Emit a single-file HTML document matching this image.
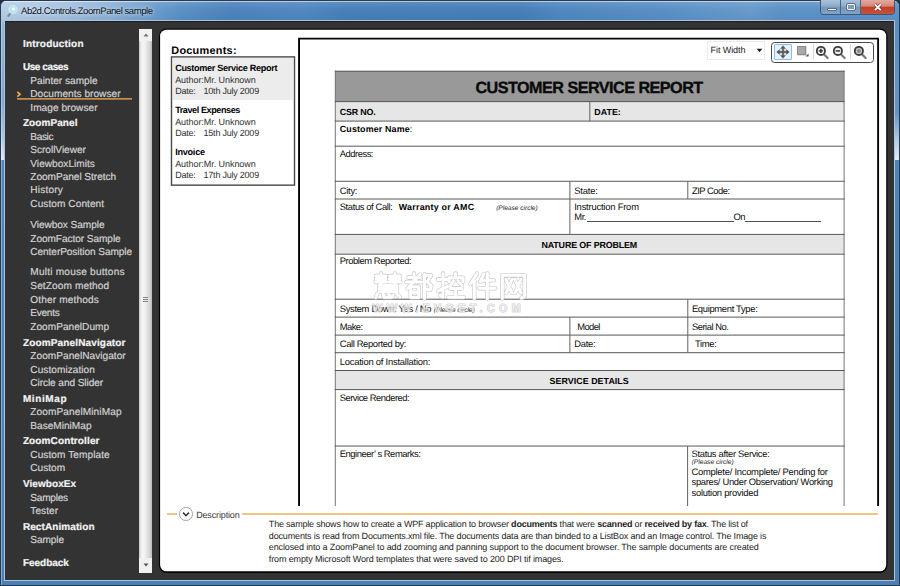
<!DOCTYPE html>
<html><head><meta charset="utf-8"><title>Ab2d.Controls.ZoomPanel sample</title>
<style>
*{margin:0;padding:0;box-sizing:border-box}
html,body{width:900px;height:586px;overflow:hidden}
body{position:relative;background:#22303f;font-family:"Liberation Sans",sans-serif}
.a{position:absolute}
.t{position:absolute;white-space:nowrap;font-family:"Liberation Sans",sans-serif;text-rendering:geometricPrecision}
.hl{position:absolute;height:1px;background:#5a5a5a}
.vl{position:absolute;width:1px;background:#5a5a5a}
</style></head><body>
<!-- window frame -->
<div class="a" id="frame" style="left:0;top:0;width:900px;height:586px;background:#4b80b6;border:1px solid #2a3a4c;border-radius:6px 6px 1px 1px"></div>
<div class="a" style="left:1px;top:21px;width:4px;height:559px;background:linear-gradient(to bottom,#93b6da 0,#7ca6d1 80px,#a6c4e2 115px,#dde9f5 139px,#4f84b9 139px,#4a7fb5 100%)"></div>
<div class="a" style="left:895px;top:21px;width:4px;height:559px;background:linear-gradient(to bottom,#5b8ec2 0,#6294c7 92px,#b3cde7 120px,#e3edf7 139px,#4f84b9 139px,#4a7fb5 100%)"></div>
<div class="a" style="left:1px;top:21px;width:1px;height:564px;background:rgba(255,255,255,.35)"></div>
<div class="a" id="titlebar" style="left:1px;top:1px;width:898px;height:21px;border-radius:5px 5px 0 0;background:linear-gradient(to right,#b6cfe8 0,#a9c5e2 50px,#8bb1d9 110px,#6d9ece 150px,#5a91c6 180px,#4c84bc 230px,#5189c1 300px,#4781b9 345px,#4680b8 520px,#5089c0 560px,#588fc5 650px,#689bcc 750px,#5e93c7 780px,#5e93c7 898px)"></div>
<div class="a" style="left:1px;top:1px;width:898px;height:21px;border-radius:5px 5px 0 0;background:linear-gradient(to bottom,rgba(255,255,255,.6) 0,rgba(255,255,255,.6) 1px,rgba(255,255,255,.1) 1.5px,rgba(255,255,255,0) 8px,rgba(0,0,0,.05) 21px)"></div>
<!-- inner light edge -->
<div class="a" style="left:4px;top:20px;width:891px;height:561px;background:#a9c5e1"></div>
<!-- content -->
<div class="a" id="content" style="left:5px;top:21px;width:889px;height:559px;background:#333;border-top:1px solid #1d1d1d"></div>

<!-- app icon -->
<svg class="a" style="left:5px;top:3px" width="15" height="16" viewBox="0 0 15 16"><line x1="3.2" y1="13" x2="5.6" y2="10.2" stroke="#858b93" stroke-width="2" stroke-linecap="round"/><circle cx="8" cy="6.5" r="4" fill="#b4e4ec" stroke="#d9e6f0" stroke-width="1.2"/><circle cx="8.4" cy="6.1" r="1.7" fill="#f2ffff"/></svg>

<!-- window buttons -->
<div class="a" style="left:820px;top:0;width:75px;height:15px;border:1px solid #3d5774;border-top:none;border-radius:0 0 4px 4px;overflow:hidden;background:#7ba3cc">
  <div class="a" style="left:0;top:0;width:20px;height:14px;background:linear-gradient(#a9c1da 0,#8eacca 45%,#7296bd 50%,#7fa3c9 100%);border-right:1px solid #4a6585"></div>
  <div class="a" style="left:20px;top:0;width:20px;height:14px;background:linear-gradient(#a9c1da 0,#8eacca 45%,#7296bd 50%,#7fa3c9 100%);border-right:1px solid #4a6585"></div>
  <div class="a" style="left:40px;top:0;width:34px;height:14px;background:linear-gradient(#e2aa9e 0,#d68674 45%,#c03e27 50%,#c9513b 100%)"></div>
</div>
<div class="a" style="left:826.5px;top:7.5px;width:10px;height:3.5px;background:#fff;border:1px solid #5b6f88;border-radius:1px"></div>
<div class="a" style="left:846.5px;top:3.5px;width:8.5px;height:6.5px;border:1.5px solid #fff;outline:1px solid #5b6f88;border-radius:1px;background:#7d9cc0"></div>
<svg class="a" style="left:872px;top:2px" width="12" height="10" viewBox="0 0 12 10"><path d="M2.9 2.4 L8.7 8.1 M8.7 2.4 L2.9 8.1" stroke="#7a3328" stroke-width="3.2"/><path d="M2.9 2.4 L8.7 8.1 M8.7 2.4 L2.9 8.1" stroke="#fff" stroke-width="1.9"/></svg>

<!-- sidebar selection marker -->
<div class="a" style="left:17px;top:98px;width:115px;height:1px;background:#c4904c"></div><div class="a" style="left:17px;top:99px;width:115px;height:1px;background:#9a7644"></div>
<svg class="a" style="left:16px;top:91px" width="6" height="7" viewBox="0 0 6 7"><path d="M1.3 0.9 L4.1 3.3 L1.3 5.7" fill="none" stroke="#eeaa4a" stroke-width="1.7"/></svg>

<!-- sidebar scrollbar -->
<div class="a" style="left:139px;top:29px;width:13px;height:544px;background:#ececec"></div>
<div class="a" style="left:139px;top:29px;width:13px;height:12px;background:#f1f1f1"></div>
<div class="a" style="left:139px;top:41px;width:13px;height:517px;border-radius:1px;background:linear-gradient(to right,#c2c2c2 0,#efefef 2px,#f5f5f5 5px,#dedede 9px,#d3d3d3 11px,#b8b8b8 13px)"></div>
<div class="a" style="left:139px;top:558px;width:13px;height:15px;background:#f0f0f0"></div>
<svg class="a" style="left:142.5px;top:33px" width="6" height="4" viewBox="0 0 6 4"><path d="M0.5 3.5 L3 0.6 L5.5 3.5Z" fill="#707070"/></svg>
<svg class="a" style="left:142.5px;top:563px" width="6" height="4" viewBox="0 0 6 4"><path d="M0.5 0.5 L3 3.4 L5.5 0.5Z" fill="#555"/></svg>
<div class="a" style="left:143px;top:297px;width:5px;height:1px;background:#858585;box-shadow:0 2px 0 #858585,0 4px 0 #858585"></div>

<!-- main white panel -->
<svg class="a" id="panel" style="left:150px;top:20px" width="750" height="566" viewBox="150 20 750 566"><rect x="158.9" y="28.6" width="728.6" height="544.3" rx="7.6" fill="#040404"/><rect x="160.1" y="29.7" width="726.1" height="541.6" rx="6.4" fill="#fff"/></svg>

<!-- documents list box -->
<svg class="a" style="left:165px;top:50px" width="136" height="142" viewBox="165 50 136 142"><rect x="171.5" y="56.9" width="123" height="128.25" fill="#fff" stroke="#484848" stroke-width="1.4"/></svg>
<div class="a" style="left:173px;top:58px;width:120px;height:42px;background:#ececec"></div>

<!-- doc viewer border (clipped at bottom) -->
<svg class="a" style="left:290px;top:30px" width="600" height="480" viewBox="290 30 600 480"><path d="M299.05 506 V38.6 H878.1 V506" fill="none" stroke="#060606" stroke-width="1.9"/></svg>

<!-- combo box -->
<div class="a" style="left:707px;top:41px;width:58px;height:19px;border:1px solid #ebebeb;background:#fff"></div>
<svg class="a" style="left:756px;top:48px" width="7" height="5" viewBox="0 0 7 5"><path d="M0.6 0.8 L6.4 0.8 L3.5 4.2Z" fill="#222"/></svg>

<!-- toolbar -->
<div class="a" style="left:771px;top:42px;width:103px;height:21px;border:1px solid #484848;border-radius:3.5px;background:#fff"></div>
<div class="a" style="left:774px;top:44px;width:18px;height:16px;border:1px solid #8bbcec;background:#e6f1fc;border-radius:1px"></div>
<svg class="a" style="left:776px;top:45px" width="14" height="14" viewBox="0 0 14 14"><path d="M7 0.7 L9.4 3.6 H7.7 V6.3 H10.4 V4.6 L13.3 7 L10.4 9.4 V7.7 H7.7 V10.4 H9.4 L7 13.3 L4.6 10.4 H6.3 V7.7 H3.6 V9.4 L0.7 7 L3.6 4.6 V6.3 H6.3 V3.6 H4.6Z" fill="#555" stroke="#555" stroke-width="0.5" stroke-linejoin="round"/></svg>
<div class="a" style="left:797px;top:46px;width:9px;height:9px;background:#a9a9a9;border:1px solid #8c8c8c;box-shadow:0.5px 0.5px 0 #bbb"></div>
<svg class="a" style="left:804.8px;top:53.2px" width="4" height="4" viewBox="0 0 4 4"><path d="M3.6 0.4 V3.6 H0.4Z" fill="#555"/></svg>
<div class="a" style="left:813px;top:44px;width:1px;height:15px;background:#d6d6d6"></div>
<div class="a" style="left:850px;top:44px;width:1px;height:15px;background:#d6d6d6"></div>
<svg class="a" style="left:814.4px;top:44px" width="16" height="16" viewBox="0 0 16 16"><line x1="9.6" y1="10" x2="13.6" y2="14" stroke="#7a7a7a" stroke-width="2.3" stroke-linecap="round"/><circle cx="6.9" cy="6.9" r="4.1" fill="#eee" stroke="#3c3c3c" stroke-width="1.8"/><path d="M4.7 6.9 H9.1 M6.9 4.7 V9.1" stroke="#2c2c2c" stroke-width="1.4"/></svg>
<svg class="a" style="left:830.8px;top:44px" width="16" height="16" viewBox="0 0 16 16"><line x1="9.6" y1="10" x2="13.6" y2="14" stroke="#7a7a7a" stroke-width="2.3" stroke-linecap="round"/><circle cx="6.9" cy="6.9" r="4.1" fill="#eee" stroke="#3c3c3c" stroke-width="1.8"/><path d="M4.7 6.9 H9.1" stroke="#2c2c2c" stroke-width="1.4"/></svg>
<svg class="a" style="left:851.7px;top:44px" width="16" height="16" viewBox="0 0 16 16"><line x1="9.6" y1="10" x2="13.6" y2="14" stroke="#7a7a7a" stroke-width="2.3" stroke-linecap="round"/><circle cx="6.9" cy="6.9" r="4.1" fill="#c4c4c4" stroke="#3c3c3c" stroke-width="1.8"/><circle cx="6.9" cy="6.9" r="2" fill="#8a8a8a"/></svg>

<!-- document table -->
<div class="a" style="left:335px;top:71px;width:509px;height:31px;background:#999"></div>
<div class="a" style="left:335px;top:102px;width:509px;height:19px;background:#e6e6e6"></div>
<div class="a" style="left:335px;top:234px;width:509px;height:20px;background:#e6e6e6"></div>
<div class="a" style="left:335px;top:370px;width:509px;height:20px;background:#e6e6e6"></div>
<!-- table lines -->
<svg class="a" style="left:330px;top:66px" width="520" height="440" viewBox="330 66 520 440"><path d="M335.3 70.7V506 M844.1 70.7V506" stroke="#767676" stroke-width="1" fill="none"/><path d="M334.8 71.2H844.6 M334.8 101.6H844.6 M334.8 121.1H844.6 M334.8 146.2H844.6 M334.8 181.25H844.6 M334.8 199.0H844.6 M334.8 234.4H844.6 M334.8 254.2H844.6 M334.8 299.2H844.6 M334.8 317.1H844.6 M334.8 335.1H844.6 M334.8 352.7H844.6 M334.8 370.5H844.6 M334.8 389.6H844.6 M334.8 446.05H844.6" stroke="#585858" stroke-width="1" fill="none"/><path d="M589.8 101.6V121.1 M569.9 181.25V234.4 M687.8 181.25V199.0 M687.8 299.2V352.7 M569.9 317.1V352.7 M687.6 446.05V506" stroke="#626262" stroke-width="1" fill="none"/></svg>
<!-- underscores -->
<div class="a" style="left:586.5px;top:221px;width:147.5px;height:1px;background:#505050"></div>
<div class="a" style="left:745px;top:221px;width:76px;height:1px;background:#505050"></div>

<!-- description -->
<div class="a" style="left:167px;top:513px;width:10px;height:2px;background:#f4c482"></div>
<div class="a" style="left:242px;top:513px;width:636px;height:2px;background:#f4c482"></div>
<div class="a" style="left:179px;top:507px;width:13.5px;height:13.5px;border:1px solid #a2a2a2;border-radius:50%;background:#fff"></div>
<svg class="a" style="left:182px;top:510.5px" width="8" height="7" viewBox="0 0 8 7"><path d="M1 1.6 L4 4.6 L7 1.6" fill="none" stroke="#3a3a3a" stroke-width="1.5"/></svg>

<div class="t" id="t0" style="left:22.90px;top:38.03px;font-size:10.0px;line-height:13px;color:#f4f4f4;font-weight:bold;letter-spacing:0.207px;-webkit-text-stroke:0.2px #f4f4f4;">Introduction</div>
<div class="t" id="t1" style="left:22.90px;top:61.23px;font-size:10.0px;line-height:13px;color:#f4f4f4;font-weight:bold;letter-spacing:-0.417px;-webkit-text-stroke:0.2px #f4f4f4;">Use cases</div>
<div class="t" id="t2" style="left:22.90px;top:116.73px;font-size:10.0px;line-height:13px;color:#f4f4f4;font-weight:bold;letter-spacing:0.087px;-webkit-text-stroke:0.2px #f4f4f4;">ZoomPanel</div>
<div class="t" id="t3" style="left:22.90px;top:336.64px;font-size:10.0px;line-height:13px;color:#f4f4f4;font-weight:bold;letter-spacing:0.151px;-webkit-text-stroke:0.2px #f4f4f4;">ZoomPanelNavigator</div>
<div class="t" id="t4" style="left:22.90px;top:392.64px;font-size:10.0px;line-height:13px;color:#f4f4f4;font-weight:bold;letter-spacing:0.600px;-webkit-text-stroke:0.2px #f4f4f4;">MiniMap</div>
<div class="t" id="t5" style="left:22.90px;top:435.44px;font-size:10.0px;line-height:13px;color:#f4f4f4;font-weight:bold;letter-spacing:0.123px;-webkit-text-stroke:0.2px #f4f4f4;">ZoomController</div>
<div class="t" id="t6" style="left:22.90px;top:478.04px;font-size:10.0px;line-height:13px;color:#f4f4f4;font-weight:bold;letter-spacing:0.072px;-webkit-text-stroke:0.2px #f4f4f4;">ViewboxEx</div>
<div class="t" id="t7" style="left:22.90px;top:520.63px;font-size:10.0px;line-height:13px;color:#f4f4f4;font-weight:bold;letter-spacing:0.086px;-webkit-text-stroke:0.2px #f4f4f4;">RectAnimation</div>
<div class="t" id="t8" style="left:22.90px;top:557.03px;font-size:10.0px;line-height:13px;color:#f4f4f4;font-weight:bold;letter-spacing:-0.020px;-webkit-text-stroke:0.2px #f4f4f4;">Feedback</div>
<div class="t" id="t9" style="left:30.30px;top:74.50px;font-size:10.1px;line-height:13px;color:#d2d2d2;letter-spacing:-0.009px;-webkit-text-stroke:0.2px #d2d2d2;">Painter sample</div>
<div class="t" id="t10" style="left:30.30px;top:88.10px;font-size:10.1px;line-height:13px;color:#d2d2d2;letter-spacing:0.028px;-webkit-text-stroke:0.2px #d2d2d2;">Documents browser</div>
<div class="t" id="t11" style="left:30.30px;top:101.80px;font-size:10.1px;line-height:13px;color:#d2d2d2;letter-spacing:0.037px;-webkit-text-stroke:0.2px #d2d2d2;">Image browser</div>
<div class="t" id="t12" style="left:30.30px;top:130.60px;font-size:10.1px;line-height:13px;color:#d2d2d2;letter-spacing:-0.369px;-webkit-text-stroke:0.2px #d2d2d2;">Basic</div>
<div class="t" id="t13" style="left:30.30px;top:144.00px;font-size:10.1px;line-height:13px;color:#d2d2d2;letter-spacing:-0.028px;-webkit-text-stroke:0.2px #d2d2d2;">ScrollViewer</div>
<div class="t" id="t14" style="left:30.30px;top:157.70px;font-size:10.1px;line-height:13px;color:#d2d2d2;letter-spacing:0.023px;-webkit-text-stroke:0.2px #d2d2d2;">ViewboxLimits</div>
<div class="t" id="t15" style="left:30.30px;top:171.40px;font-size:10.1px;line-height:13px;color:#d2d2d2;letter-spacing:-0.037px;-webkit-text-stroke:0.2px #d2d2d2;">ZoomPanel Stretch</div>
<div class="t" id="t16" style="left:30.30px;top:184.40px;font-size:10.1px;line-height:13px;color:#d2d2d2;letter-spacing:0.201px;-webkit-text-stroke:0.2px #d2d2d2;">History</div>
<div class="t" id="t17" style="left:30.30px;top:198.40px;font-size:10.1px;line-height:13px;color:#d2d2d2;letter-spacing:0.067px;-webkit-text-stroke:0.2px #d2d2d2;">Custom Content</div>
<div class="t" id="t18" style="left:30.30px;top:219.00px;font-size:10.1px;line-height:13px;color:#d2d2d2;letter-spacing:-0.061px;-webkit-text-stroke:0.2px #d2d2d2;">Viewbox Sample</div>
<div class="t" id="t19" style="left:30.30px;top:232.60px;font-size:10.1px;line-height:13px;color:#d2d2d2;letter-spacing:-0.064px;-webkit-text-stroke:0.2px #d2d2d2;">ZoomFactor Sample</div>
<div class="t" id="t20" style="left:30.30px;top:246.00px;font-size:10.1px;line-height:13px;color:#d2d2d2;letter-spacing:-0.071px;-webkit-text-stroke:0.2px #d2d2d2;">CenterPosition Sample</div>
<div class="t" id="t21" style="left:30.30px;top:266.20px;font-size:10.1px;line-height:13px;color:#d2d2d2;letter-spacing:0.216px;-webkit-text-stroke:0.2px #d2d2d2;">Multi mouse buttons</div>
<div class="t" id="t22" style="left:30.30px;top:280.30px;font-size:10.1px;line-height:13px;color:#d2d2d2;letter-spacing:0.106px;-webkit-text-stroke:0.2px #d2d2d2;">SetZoom method</div>
<div class="t" id="t23" style="left:30.30px;top:293.90px;font-size:10.1px;line-height:13px;color:#d2d2d2;letter-spacing:0.154px;-webkit-text-stroke:0.2px #d2d2d2;">Other methods</div>
<div class="t" id="t24" style="left:30.30px;top:306.80px;font-size:10.1px;line-height:13px;color:#d2d2d2;letter-spacing:-0.290px;-webkit-text-stroke:0.2px #d2d2d2;">Events</div>
<div class="t" id="t25" style="left:30.30px;top:320.80px;font-size:10.1px;line-height:13px;color:#d2d2d2;letter-spacing:0.022px;-webkit-text-stroke:0.2px #d2d2d2;">ZoomPanelDump</div>
<div class="t" id="t26" style="left:30.30px;top:350.00px;font-size:10.1px;line-height:13px;color:#d2d2d2;letter-spacing:0.034px;-webkit-text-stroke:0.2px #d2d2d2;">ZoomPanelNavigator</div>
<div class="t" id="t27" style="left:30.30px;top:363.60px;font-size:10.1px;line-height:13px;color:#d2d2d2;letter-spacing:0.053px;-webkit-text-stroke:0.2px #d2d2d2;">Customization</div>
<div class="t" id="t28" style="left:30.30px;top:376.80px;font-size:10.1px;line-height:13px;color:#d2d2d2;letter-spacing:-0.078px;-webkit-text-stroke:0.2px #d2d2d2;">Circle and Slider</div>
<div class="t" id="t29" style="left:30.30px;top:406.20px;font-size:10.1px;line-height:13px;color:#d2d2d2;letter-spacing:0.096px;-webkit-text-stroke:0.2px #d2d2d2;">ZoomPanelMiniMap</div>
<div class="t" id="t30" style="left:30.30px;top:419.60px;font-size:10.1px;line-height:13px;color:#d2d2d2;letter-spacing:0.005px;-webkit-text-stroke:0.2px #d2d2d2;">BaseMiniMap</div>
<div class="t" id="t31" style="left:30.30px;top:448.80px;font-size:10.1px;line-height:13px;color:#d2d2d2;letter-spacing:0.075px;-webkit-text-stroke:0.2px #d2d2d2;">Custom Template</div>
<div class="t" id="t32" style="left:30.30px;top:462.20px;font-size:10.1px;line-height:13px;color:#d2d2d2;letter-spacing:0.006px;-webkit-text-stroke:0.2px #d2d2d2;">Custom</div>
<div class="t" id="t33" style="left:30.30px;top:491.60px;font-size:10.1px;line-height:13px;color:#d2d2d2;letter-spacing:-0.245px;-webkit-text-stroke:0.2px #d2d2d2;">Samples</div>
<div class="t" id="t34" style="left:30.30px;top:505.00px;font-size:10.1px;line-height:13px;color:#d2d2d2;letter-spacing:0.062px;-webkit-text-stroke:0.2px #d2d2d2;">Tester</div>
<div class="t" id="t35" style="left:30.30px;top:534.20px;font-size:10.1px;line-height:13px;color:#d2d2d2;letter-spacing:-0.085px;-webkit-text-stroke:0.2px #d2d2d2;">Sample</div>
<div class="t" id="t36" style="left:21.02px;top:5.91px;font-size:9.5px;line-height:12px;color:#0a1018;letter-spacing:-0.439px;text-shadow:0 0 3px rgba(255,255,255,.75),0 0 6px rgba(255,255,255,.5);">Ab2d.Controls.ZoomPanel sample</div>
<div class="t" id="t37" style="left:171.26px;top:44.02px;font-size:10.9px;line-height:14px;color:#000;font-weight:bold;letter-spacing:0.261px;">Documents:</div>
<div class="t" id="t38" style="left:175.14px;top:61.75px;font-size:9.1px;line-height:12px;color:#000;font-weight:bold;letter-spacing:-0.312px;">Customer Service Report</div>
<div class="t" id="t39" style="left:175.15px;top:73.58px;font-size:9.0px;line-height:12px;color:#303030;letter-spacing:-0.056px;">Author:Mr. Unknown</div>
<div class="t" id="t40" style="left:175.15px;top:85.13px;font-size:9.0px;line-height:12px;color:#303030;letter-spacing:-0.254px;">Date:</div>
<div class="t" id="t41" style="left:203.55px;top:85.13px;font-size:9.0px;line-height:12px;color:#303030;letter-spacing:-0.227px;">10th July 2009</div>
<div class="t" id="t42" style="left:175.14px;top:103.95px;font-size:9.1px;line-height:12px;color:#000;font-weight:bold;letter-spacing:-0.434px;">Travel Expenses</div>
<div class="t" id="t43" style="left:175.15px;top:115.78px;font-size:9.0px;line-height:12px;color:#303030;letter-spacing:-0.056px;">Author:Mr. Unknown</div>
<div class="t" id="t44" style="left:175.15px;top:127.33px;font-size:9.0px;line-height:12px;color:#303030;letter-spacing:-0.254px;">Date:</div>
<div class="t" id="t45" style="left:203.55px;top:127.33px;font-size:9.0px;line-height:12px;color:#303030;letter-spacing:-0.227px;">15th July 2009</div>
<div class="t" id="t46" style="left:175.14px;top:145.85px;font-size:9.1px;line-height:12px;color:#000;font-weight:bold;letter-spacing:-0.239px;">Invoice</div>
<div class="t" id="t47" style="left:175.15px;top:157.68px;font-size:9.0px;line-height:12px;color:#303030;letter-spacing:-0.056px;">Author:Mr. Unknown</div>
<div class="t" id="t48" style="left:175.15px;top:169.23px;font-size:9.0px;line-height:12px;color:#303030;letter-spacing:-0.254px;">Date:</div>
<div class="t" id="t49" style="left:203.55px;top:169.23px;font-size:9.0px;line-height:12px;color:#303030;letter-spacing:-0.227px;">17th July 2009</div>
<div class="t" id="t50" style="left:710.55px;top:43.88px;font-size:9.0px;line-height:12px;color:#222;letter-spacing:-0.077px;">Fit Width</div>
<div class="t" id="t51" style="left:475.38px;top:77.89px;font-size:16.2px;line-height:21px;color:#0a0a0a;font-weight:bold;letter-spacing:-0.533px;-webkit-text-stroke:0.35px #0a0a0a;">CUSTOMER SERVICE REPORT</div>
<div class="t" id="t52" style="left:339.75px;top:106.22px;font-size:8.9px;line-height:12px;color:#000;font-weight:bold;letter-spacing:-0.166px;">CSR NO.</div>
<div class="t" id="t53" style="left:594.35px;top:106.22px;font-size:8.9px;line-height:12px;color:#000;font-weight:bold;letter-spacing:0.005px;">DATE:</div>
<div class="t" id="t54" style="left:339.75px;top:123.32px;font-size:8.9px;line-height:12px;color:#000;letter-spacing:0.151px;"><b>Customer Name</b>:</div>
<div class="t" id="t55" style="left:339.73px;top:147.54px;font-size:9.4px;line-height:12px;color:#0c0c0c;letter-spacing:-0.466px;">Address:</div>
<div class="t" id="t56" style="left:339.73px;top:184.54px;font-size:9.4px;line-height:12px;color:#0c0c0c;letter-spacing:-0.252px;">City:</div>
<div class="t" id="t57" style="left:574.23px;top:184.54px;font-size:9.4px;line-height:12px;color:#0c0c0c;letter-spacing:-0.152px;">State:</div>
<div class="t" id="t58" style="left:691.93px;top:184.54px;font-size:9.4px;line-height:12px;color:#0c0c0c;letter-spacing:-0.488px;">ZIP Code:</div>
<div class="t" id="t59" style="left:339.73px;top:200.74px;font-size:9.4px;line-height:12px;color:#0c0c0c;letter-spacing:-0.374px;">Status of Call:</div>
<div class="t" id="t60" style="left:398.75px;top:200.92px;font-size:8.9px;line-height:12px;color:#000;font-weight:bold;letter-spacing:0.247px;">Warranty or AMC</div>
<div class="t" id="t61" style="left:496.17px;top:204.21px;font-size:6.6px;line-height:9px;color:#222;font-style:italic;letter-spacing:-0.016px;">(Please circle)</div>
<div class="t" id="t62" style="left:574.23px;top:200.94px;font-size:9.4px;line-height:12px;color:#0c0c0c;letter-spacing:-0.200px;">Instruction From</div>
<div class="t" id="t63" style="left:574.23px;top:211.14px;font-size:9.4px;line-height:12px;color:#0c0c0c;letter-spacing:-0.396px;">Mr.</div>
<div class="t" id="t64" style="left:733.53px;top:211.14px;font-size:9.4px;line-height:12px;color:#0c0c0c;letter-spacing:-0.576px;">On</div>
<div class="t" id="t65" style="left:541.45px;top:238.52px;font-size:8.9px;line-height:12px;color:#000;font-weight:bold;letter-spacing:-0.135px;">NATURE OF PROBLEM</div>
<div class="t" id="t66" style="left:339.73px;top:255.34px;font-size:9.4px;line-height:12px;color:#0c0c0c;letter-spacing:-0.422px;">Problem Reported:</div>
<div class="t" id="t67" style="left:339.73px;top:303.44px;font-size:9.4px;line-height:12px;color:#0c0c0c;letter-spacing:-0.311px;">System Down: Yes / No</div>
<div class="t" id="t68" style="left:433.67px;top:305.81px;font-size:6.6px;line-height:9px;color:#222;font-style:italic;letter-spacing:-0.059px;">(Please circle)</div>
<div class="t" id="t69" style="left:691.93px;top:303.44px;font-size:9.4px;line-height:12px;color:#0c0c0c;letter-spacing:-0.311px;">Equipment Type:</div>
<div class="t" id="t70" style="left:339.73px;top:321.34px;font-size:9.4px;line-height:12px;color:#0c0c0c;letter-spacing:-0.523px;">Make:</div>
<div class="t" id="t71" style="left:577.23px;top:321.34px;font-size:9.4px;line-height:12px;color:#0c0c0c;letter-spacing:-0.577px;">Model</div>
<div class="t" id="t72" style="left:691.93px;top:321.34px;font-size:9.4px;line-height:12px;color:#0c0c0c;letter-spacing:-0.481px;">Serial No.</div>
<div class="t" id="t73" style="left:339.73px;top:337.94px;font-size:9.4px;line-height:12px;color:#0c0c0c;letter-spacing:-0.356px;">Call Reported by:</div>
<div class="t" id="t74" style="left:574.23px;top:337.94px;font-size:9.4px;line-height:12px;color:#0c0c0c;letter-spacing:-0.245px;">Date:</div>
<div class="t" id="t75" style="left:695.03px;top:337.94px;font-size:9.4px;line-height:12px;color:#0c0c0c;letter-spacing:-0.338px;">Time:</div>
<div class="t" id="t76" style="left:339.73px;top:355.74px;font-size:9.4px;line-height:12px;color:#0c0c0c;letter-spacing:-0.215px;">Location of Installation:</div>
<div class="t" id="t77" style="left:549.55px;top:374.62px;font-size:8.9px;line-height:12px;color:#000;font-weight:bold;letter-spacing:0.044px;">SERVICE DETAILS</div>
<div class="t" id="t78" style="left:339.73px;top:391.54px;font-size:9.4px;line-height:12px;color:#0c0c0c;letter-spacing:-0.482px;">Service Rendered:</div>
<div class="t" id="t79" style="left:339.73px;top:447.74px;font-size:9.4px;line-height:12px;color:#0c0c0c;letter-spacing:-0.452px;">Engineer&rsquo; s Remarks:</div>
<div class="t" id="t80" style="left:691.53px;top:448.44px;font-size:9.4px;line-height:12px;color:#0c0c0c;letter-spacing:-0.309px;">Status after Service:</div>
<div class="t" id="t81" style="left:691.67px;top:458.21px;font-size:6.6px;line-height:9px;color:#222;font-style:italic;letter-spacing:0.013px;">(Please circle)</div>
<div class="t" id="t82" style="left:691.53px;top:465.54px;font-size:9.4px;line-height:12px;color:#0c0c0c;letter-spacing:-0.247px;">Complete/ Incomplete/ Pending for</div>
<div class="t" id="t83" style="left:691.53px;top:476.04px;font-size:9.4px;line-height:12px;color:#0c0c0c;letter-spacing:-0.304px;">spares/ Under Observation/ Working</div>
<div class="t" id="t84" style="left:691.53px;top:486.64px;font-size:9.4px;line-height:12px;color:#0c0c0c;letter-spacing:-0.253px;">solution provided</div>
<div class="t" id="t85" style="left:196.15px;top:509.38px;font-size:9.0px;line-height:12px;color:#3a3a3a;letter-spacing:-0.143px;">Description</div>
<div class="t" id="t86" style="left:268.85px;top:517.68px;font-size:9.0px;line-height:12px;color:#1c1c1c;letter-spacing:-0.198px;">The sample shows how to create a WPF application to browser <b>documents</b> that were <b>scanned</b> or <b>received by fax</b>. The list of</div>
<div class="t" id="t87" style="left:268.85px;top:530.48px;font-size:9.0px;line-height:12px;color:#1c1c1c;letter-spacing:-0.164px;">documents is read from Documents.xml file. The documents data are than binded to a ListBox and an Image control. The Image is</div>
<div class="t" id="t88" style="left:268.85px;top:541.18px;font-size:9.0px;line-height:12px;color:#1c1c1c;letter-spacing:-0.130px;">enclosed into a ZoomPanel to add zooming and panning support to the document browser. The sample documents are created</div>
<div class="t" id="t89" style="left:268.85px;top:552.88px;font-size:9.0px;line-height:12px;color:#1c1c1c;letter-spacing:-0.124px;">from empty Microsoft Word templates that were saved to 200 DPI tif images.</div>
<!-- watermark -->
<svg class="a" style="left:368px;top:270px;opacity:.92" width="164" height="46" viewBox="368 270 164 46">
<g fill="none" stroke-linecap="round" stroke-linejoin="round">
<path transform="translate(375 273.5)" d="M1 2.5H11 M1 5.5H11 M0.5 8.5H11.5 M6 0V10.5 M14.5 2.5H25 M14.5 5.5H25 M14 8.5H25.5 M19.8 0V10.5 M4 12H22V18H4 M4 15H22 M2.5 20L0.8 24 M8 19.5L8.8 23.8H17.2L18 21.5 M13 19L14.5 21.5 M21 19.5L24.8 23.5" stroke="#c4c4c4" stroke-width="4.3"/>
<path transform="translate(406.5 273.5)" d="M2 4H13 M7.5 0V8.5 M0 8.5H15 M13.5 1L1 15 M4.2 13.2H12.2V24H4.2Z M4.2 18.6H12.2 M18 1V25 M18 2H24.5L20.8 8L24.8 12.5L23.5 16.5L19.5 15.5" stroke="#c4c4c4" stroke-width="4.3"/>
<path transform="translate(438 273.5)" d="M0 6H9.5 M5 0V23.5L2 22 M0 17.5L9.5 13 M17.5 0V3 M11 8V4.2H25V8 M15.5 7.5L12 12.5 M20 7.5L24 12 M12 15H23.5 M17.8 15V23.5 M10.5 23.8H25.8" stroke="#c4c4c4" stroke-width="4.3"/>
<path transform="translate(469.5 273.5)" d="M7.5 0L1 10.5 M4.8 7V25 M14 1L10.8 8 M11.5 6.8H24.5 M9.5 14.8H25.8 M17.8 0V25" stroke="#c4c4c4" stroke-width="4.3"/>
<path transform="translate(500.5 273.5)" d="M1.8 25V1.8H24.2V23L21 24.5 M5.5 6L11.5 19.5 M11.5 6L5.5 19.5 M14.5 6L20.5 19.5 M20.5 6L14.5 19.5" stroke="#c4c4c4" stroke-width="4.3"/>
<path transform="translate(375 273.5)" d="M1 2.5H11 M1 5.5H11 M0.5 8.5H11.5 M6 0V10.5 M14.5 2.5H25 M14.5 5.5H25 M14 8.5H25.5 M19.8 0V10.5 M4 12H22V18H4 M4 15H22 M2.5 20L0.8 24 M8 19.5L8.8 23.8H17.2L18 21.5 M13 19L14.5 21.5 M21 19.5L24.8 23.5" stroke="#ffffff" stroke-width="3.1"/>
<path transform="translate(406.5 273.5)" d="M2 4H13 M7.5 0V8.5 M0 8.5H15 M13.5 1L1 15 M4.2 13.2H12.2V24H4.2Z M4.2 18.6H12.2 M18 1V25 M18 2H24.5L20.8 8L24.8 12.5L23.5 16.5L19.5 15.5" stroke="#ffffff" stroke-width="3.1"/>
<path transform="translate(438 273.5)" d="M0 6H9.5 M5 0V23.5L2 22 M0 17.5L9.5 13 M17.5 0V3 M11 8V4.2H25V8 M15.5 7.5L12 12.5 M20 7.5L24 12 M12 15H23.5 M17.8 15V23.5 M10.5 23.8H25.8" stroke="#ffffff" stroke-width="3.1"/>
<path transform="translate(469.5 273.5)" d="M7.5 0L1 10.5 M4.8 7V25 M14 1L10.8 8 M11.5 6.8H24.5 M9.5 14.8H25.8 M17.8 0V25" stroke="#ffffff" stroke-width="3.1"/>
<path transform="translate(500.5 273.5)" d="M1.8 25V1.8H24.2V23L21 24.5 M5.5 6L11.5 19.5 M11.5 6L5.5 19.5 M14.5 6L20.5 19.5 M20.5 6L14.5 19.5" stroke="#ffffff" stroke-width="3.1"/>
</g>
<text x="372.5" y="312.2" textLength="148" lengthAdjust="spacing" font-family="Liberation Sans, sans-serif" font-weight="bold" font-size="10.6" fill="#fff" fill-opacity=".6" stroke="#bcbcbc" stroke-opacity=".75" stroke-width="1.2" paint-order="stroke" stroke-linejoin="round">WWW.EVGET.COM</text>
</svg>
</body></html>
